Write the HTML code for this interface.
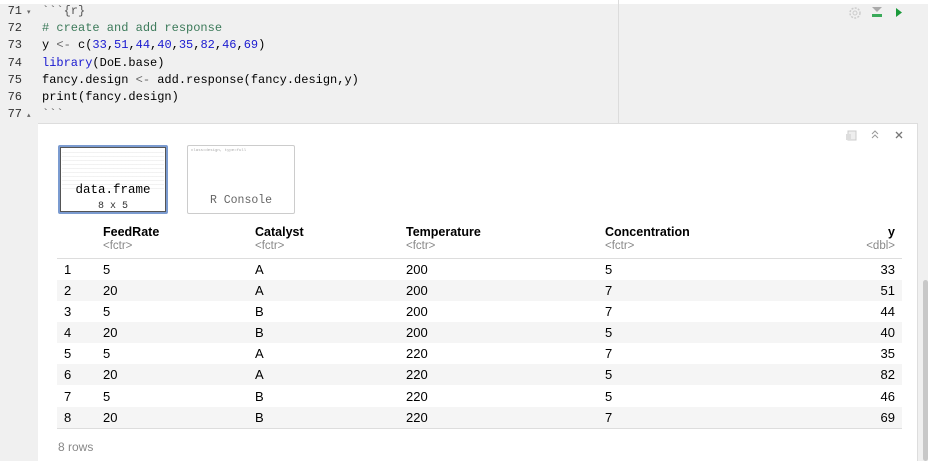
<!DOCTYPE html>
<html><head><style>
*{margin:0;padding:0;box-sizing:border-box}
body{width:928px;height:461px;overflow:hidden;background:#f0f0f0;position:relative;font-family:"Liberation Sans",sans-serif}
.top{position:absolute;left:0;top:0;width:928px;height:4px;background:#fff}
.margin{position:absolute;left:618px;top:0;width:1px;height:123px;background:#dcdcdc}
.ln{position:absolute;left:0;width:22px;text-align:right;font:12px "Liberation Mono",monospace;color:#333}
.code{position:absolute;left:42px;font:12px "Liberation Mono",monospace;color:#000;white-space:pre}
.fold{position:absolute;left:27px;font-size:7px;color:#666}
.panel{position:absolute;left:38px;top:123px;width:880px;height:338px;background:#fff;border-top:1px solid #ddd;border-right:1px solid #ddd}
.scroll{position:absolute;left:923px;top:280px;width:5px;height:181px;background:#c8c8c8;border-radius:3px}
table{position:absolute;left:57px;top:225px;width:845px;border-collapse:collapse;color:#000}
th{text-align:left;font-weight:bold;font-size:12.5px;padding:0;height:33px;vertical-align:top;line-height:15px}
th span{display:block;font-weight:normal;color:#888;font-size:11.5px;line-height:13px}
td{height:21.2px;padding:0;font-size:13px;line-height:21px}
td:first-child{padding-left:7px}
.r{text-align:right;padding-right:7px}
tr.h{border-bottom:1px solid #ddd}
tr.e td{background:#f5f5f5}
tbody tr:last-child{border-bottom:1px solid #ddd}
</style></head><body>
<div class="top"></div>
<div class="margin"></div>
<div class="ln" style="top:4px">71</div><div class="fold" style="top:8px">▾</div>
<div class="ln" style="top:21px">72</div>
<div class="ln" style="top:38px">73</div>
<div class="ln" style="top:56px">74</div>
<div class="ln" style="top:73px">75</div>
<div class="ln" style="top:90px">76</div>
<div class="ln" style="top:107px">77</div><div class="fold" style="top:111px">▴</div>
<div class="code" style="top:4px;color:#555">&#96;&#96;&#96;{r}</div>
<div class="code" style="top:21px;color:#3c7a5a"># create and add response</div>
<div class="code" style="top:38px">y <span style="color:#666">&lt;-</span> c(<span style="color:#1a1ad0">33</span>,<span style="color:#1a1ad0">51</span>,<span style="color:#1a1ad0">44</span>,<span style="color:#1a1ad0">40</span>,<span style="color:#1a1ad0">35</span>,<span style="color:#1a1ad0">82</span>,<span style="color:#1a1ad0">46</span>,<span style="color:#1a1ad0">69</span>)</div>
<div class="code" style="top:56px"><span style="color:#1a1ad0">library</span>(DoE.base)</div>
<div class="code" style="top:73px">fancy.design <span style="color:#666">&lt;-</span> add.response(fancy.design,y)</div>
<div class="code" style="top:90px">print(fancy.design)</div>
<div class="code" style="top:107px;color:#555">&#96;&#96;&#96;</div>
<svg style="position:absolute;left:848px;top:6px" width="14" height="14" viewBox="0 0 14 14"><circle cx="7" cy="7" r="5" fill="none" stroke="#ccc" stroke-width="1.5" stroke-dasharray="2 1.3"/><circle cx="7" cy="7" r="2" fill="none" stroke="#ccc"/></svg>
<svg style="position:absolute;left:871px;top:7px" width="12" height="11"><path d="M1 0H11L6 5Z" fill="#aaa"/><rect x="1" y="7" width="10" height="3" fill="#3aaa5a"/></svg>
<svg style="position:absolute;left:895px;top:8px" width="8" height="9"><path d="M1 0L7 4.5L1 9Z" fill="#1a9a3a"/></svg>
<div class="panel"></div>
<div class="scroll"></div>
<svg style="position:absolute;left:845px;top:130px" width="12" height="11"><rect x="3" y="1" width="8" height="9" fill="#eee" stroke="#ccc"/><rect x="1" y="4" width="5" height="6" fill="#ddd"/></svg>
<svg style="position:absolute;left:870px;top:129px" width="10" height="10"><path d="M2 5L5 2L8 5M2 9L5 6L8 9" fill="none" stroke="#999"/></svg>
<svg style="position:absolute;left:895px;top:131px" width="8" height="8"><path d="M1 1L7 7M7 1L1 7" stroke="#777" stroke-width="1.3"/></svg>
<div style="position:absolute;left:58px;top:145px;width:110px;height:69px;border:2px solid #7b9bd0;border-radius:2px;background:#fff;box-shadow:inset 0 0 0 1px #555"></div>
<div style="position:absolute;left:62px;top:149px;width:102px;height:40px;background:repeating-linear-gradient(#fff 0 3px,#eee 3px 4px);opacity:.8"></div>
<div style="position:absolute;left:58px;top:183px;width:110px;text-align:center;font:12.5px 'Liberation Mono',monospace">data.frame</div>
<div style="position:absolute;left:58px;top:201px;width:110px;text-align:center;font:10px 'Liberation Mono',monospace;color:#333">8 x 5</div>
<div style="position:absolute;left:187px;top:145px;width:108px;height:69px;border:1px solid #ccc;border-radius:2px;background:#fff"></div>
<div style="position:absolute;left:191px;top:149px;font:4px 'Liberation Mono',monospace;color:#aaa">class=design, type=full</div>
<div style="position:absolute;left:187px;top:194px;width:108px;text-align:center;font:11.5px 'Liberation Mono',monospace;color:#666">R Console</div>
<table>
<thead><tr class="h"><th style="width:46px"></th><th style="width:152px">FeedRate<span>&lt;fctr&gt;</span></th><th style="width:151px">Catalyst<span>&lt;fctr&gt;</span></th><th style="width:199px">Temperature<span>&lt;fctr&gt;</span></th><th style="width:200px">Concentration<span>&lt;fctr&gt;</span></th><th class="r">y<span>&lt;dbl&gt;</span></th></tr></thead>
<tbody>
<tr><td>1</td><td>5</td><td>A</td><td>200</td><td>5</td><td class="r">33</td></tr>
<tr class="e"><td>2</td><td>20</td><td>A</td><td>200</td><td>7</td><td class="r">51</td></tr>
<tr><td>3</td><td>5</td><td>B</td><td>200</td><td>7</td><td class="r">44</td></tr>
<tr class="e"><td>4</td><td>20</td><td>B</td><td>200</td><td>5</td><td class="r">40</td></tr>
<tr><td>5</td><td>5</td><td>A</td><td>220</td><td>7</td><td class="r">35</td></tr>
<tr class="e"><td>6</td><td>20</td><td>A</td><td>220</td><td>5</td><td class="r">82</td></tr>
<tr><td>7</td><td>5</td><td>B</td><td>220</td><td>5</td><td class="r">46</td></tr>
<tr class="e"><td>8</td><td>20</td><td>B</td><td>220</td><td>7</td><td class="r">69</td></tr>
</tbody></table>
<div style="position:absolute;left:58px;top:440px;font-size:12px;color:#888">8 rows</div>
</body></html>
